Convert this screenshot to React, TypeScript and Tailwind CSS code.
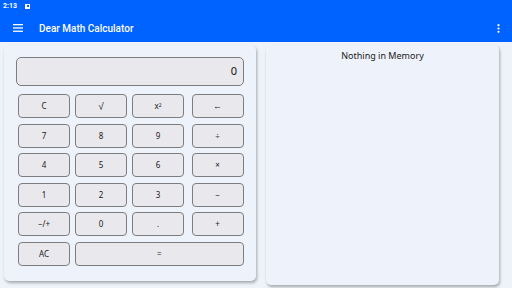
import React from "react";

const Btn = ({ label, className = "" }: { label: React.ReactNode; className?: string }) => (
  <div
    className={`h-[24px] rounded-[4px] border border-[#7d7d80] bg-[#e9e8ec] flex items-center justify-center text-[8px] text-[#1a1a1a] ${className}`}
  >
    {label}
  </div>
);

export default function App() {
  const rows: React.ReactNode[][] = [
    ["C", <span className="text-[10px] font-medium">√</span>, <span>x<sup className="text-[5px]">2</sup></span>, <span className="text-[9px] font-bold">←</span>],
    ["7", "8", "9", "÷"],
    ["4", "5", "6", "×"],
    ["1", "2", "3", "−"],
    ["−/+", "0", ".", "+"],
  ];
  return (
    <div
      className="w-[512px] h-[288px] bg-[#eef2f9] flex flex-col overflow-hidden"
      style={{ fontFamily: '"Noto Sans", sans-serif' }}
    >
      <div className="bg-[#0062ff] h-[42px] flex flex-col text-white">
        <div className="h-[12px] flex items-center pl-[3px] gap-[8px]" style={{ fontFamily: "Roboto, sans-serif" }}>
          <span className="text-[7px] font-bold leading-none">2:13</span>
          <span className="w-[5px] h-[5px] bg-white flex items-center justify-center">
            <span className="w-[2px] h-[2px] bg-[#0062ff]" />
          </span>
        </div>
        <div className="flex-1 flex items-center pl-[13px] pr-[12px]" style={{ fontFamily: "Roboto, sans-serif" }}>
          <svg width="10" height="8" viewBox="0 0 10 8" className="mt-[1px]">
            <rect x="0" y="0" width="10" height="1.3" fill="white" />
            <rect x="0" y="3.3" width="10" height="1.3" fill="white" />
            <rect x="0" y="6.6" width="10" height="1.3" fill="white" />
          </svg>
          <span className="ml-[16px] text-[10px] font-medium mt-[2px]">Dear Math Calculator</span>
          <div className="flex-1" />
          <svg width="3" height="9" viewBox="0 0 3 9" className="mt-[2px]">
            <circle cx="1.5" cy="1.2" r="1.1" fill="white" />
            <circle cx="1.5" cy="4.5" r="1.1" fill="white" />
            <circle cx="1.5" cy="7.8" r="1.1" fill="white" />
          </svg>
        </div>
      </div>
      <div className="flex pl-[4px] pt-[3px] gap-[10px]">
        <div className="w-[252px] h-[236px] bg-[#eef2fa] rounded-[5px] shadow-[1px_2px_3px_rgba(0,0,0,0.3)] pt-[12px] px-[12px] flex flex-col">
          <div className="h-[29px] rounded-[5px] border border-[#7d7d80] bg-[#e9e8ec] flex items-center justify-end pr-[6px] text-[11px] text-[#111]">
            0
          </div>
          <div className="mt-[8px] flex flex-col gap-[5.5px] pl-[2px]">
            {rows.map((r, i) => (
              <div key={i} className="flex">
                <Btn label={r[0]} className="w-[52px]" />
                <Btn label={r[1]} className="w-[52px] ml-[5px]" />
                <Btn label={r[2]} className="w-[52px] ml-[5px]" />
                <Btn label={r[3]} className="w-[52px] ml-[7.5px]" />
              </div>
            ))}
            <div className="flex">
              <Btn label="AC" className="w-[52px]" />
              <Btn label="=" className="w-[168.5px] ml-[5px]" />
            </div>
          </div>
        </div>
        <div className="w-[233px] h-[240px] bg-[#eef2fa] rounded-[5px] shadow-[1px_2px_3px_rgba(0,0,0,0.3)] flex flex-col items-center pt-[4px]">
          <span className="text-[9px] text-[#1a1a1a]">Nothing in Memory</span>
        </div>
      </div>
    </div>
  );
}
